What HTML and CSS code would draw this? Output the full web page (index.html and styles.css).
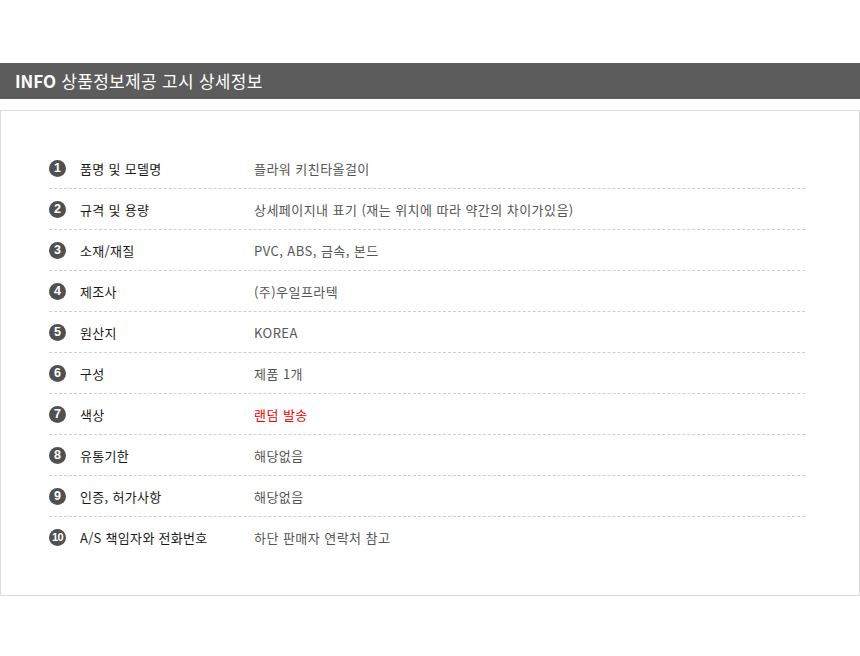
FILE: index.html
```html
<!DOCTYPE html>
<html lang="ko">
<head>
<meta charset="utf-8">
<link rel="stylesheet" href="styles.css">
</head>
<body>
<div class="page">
  <h2 class="title"><b>INFO</b> 상품정보제공 고시 상세정보</h2>
  <div class="box">
    <ul class="list">
      <li class="row"><span class="num">1</span><span class="label">품명 및 모델명</span><span class="value">플라워 키친타올걸이</span></li>
      <li class="row"><span class="num">2</span><span class="label">규격 및 용량</span><span class="value">상세페이지내 표기 (재는 위치에 따라 약간의 차이가있음)</span></li>
      <li class="row"><span class="num">3</span><span class="label">소재/재질</span><span class="value">PVC, ABS, 금속, 본드</span></li>
      <li class="row"><span class="num">4</span><span class="label">제조사</span><span class="value">(주)우일프라텍</span></li>
      <li class="row"><span class="num">5</span><span class="label">원산지</span><span class="value">KOREA</span></li>
      <li class="row"><span class="num">6</span><span class="label">구성</span><span class="value">제품 1개</span></li>
      <li class="row"><span class="num">7</span><span class="label">색상</span><span class="value red">랜덤 발송</span></li>
      <li class="row"><span class="num">8</span><span class="label">유통기한</span><span class="value">해당없음</span></li>
      <li class="row"><span class="num">9</span><span class="label">인증, 허가사항</span><span class="value">해당없음</span></li>
      <li class="row"><span class="num small">10</span><span class="label">A/S 책임자와 전화번호</span><span class="value">하단 판매자 연락처 참고</span></li>
    </ul>
  </div>
</div>
</body>
</html>
```
FILE: styles.css
```css
* { box-sizing: border-box; }
html, body { margin: 0; padding: 0; background: #fff; }
body {
  font-family: "Noto Sans CJK KR", "Noto Sans", sans-serif;
  color: #222;
}
.page { padding-top: 63px; }
.title {
  margin: 0;
  height: 36px;
  background: #5c5c5c;
  color: #fff;
  font-size: 17px;
  font-weight: 400;
  line-height: 36px;
  padding-left: 15px;
  letter-spacing: 0.3px;
}
.title b { font-weight: 700; letter-spacing: 0; }
.box {
  margin-top: 11px;
  width: 860px;
  height: 486px;
  border: 1px solid #dcdcdc;
  padding: 37px 54px 0 48px;
}
.list { list-style: none; margin: 0; padding: 0; }
.row {
  display: flex;
  align-items: center;
  height: 41px;
  border-bottom: 1px dashed #cfcfcf;
  font-size: 13px;
  letter-spacing: 0.45px;
}
.row:last-child { border-bottom: 0; }
.num {
  width: 17px;
  height: 17px;
  border-radius: 50%;
  background: #505050;
  color: #fff;
  font-family: "Liberation Sans", sans-serif;
  font-weight: 700;
  font-size: 12.5px;
  line-height: 17px;
  letter-spacing: 0;
  text-align: center;
  flex: none;
}
.num.small { font-size: 11px; letter-spacing: -0.6px; }
.label {
  width: 174px;
  margin-left: 14px;
  color: #1a1a1a;
  flex: none;
  letter-spacing: 0.3px;
}
.value { color: #555; }
.value.red { color: #f00000; }
```
